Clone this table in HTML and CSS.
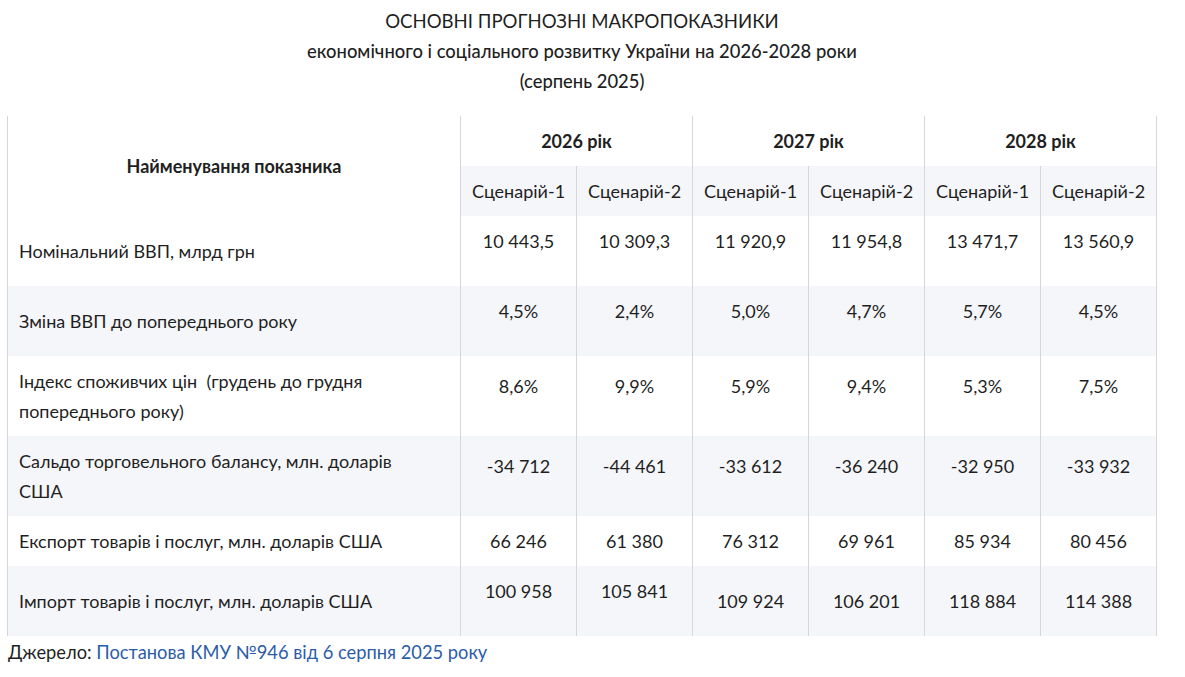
FILE: index.html
```html
<!DOCTYPE html>
<html lang="uk">
<head>
<meta charset="utf-8">
<title>Основні прогнозні макропоказники</title>
<link rel="stylesheet" href="styles.css">
</head>
<body>
<div class="page">
  <h1 class="title">ОСНОВНІ ПРОГНОЗНІ МАКРОПОКАЗНИКИ</h1>
  <p class="subtitle">економічного і соціального розвитку України на 2026-2028 роки</p>
  <p class="date">(серпень 2025)</p>
  <table class="macro">
    <colgroup>
      <col class="col-name">
      <col><col><col><col><col><col>
    </colgroup>
    <thead>
      <tr class="years">
        <th rowspan="2" class="name-head">Найменування показника</th>
        <th colspan="2">2026 рік</th>
        <th colspan="2">2027 рік</th>
        <th colspan="2">2028 рік</th>
      </tr>
      <tr class="scen">
        <th>Сценарій-1</th><th>Сценарій-2</th>
        <th>Сценарій-1</th><th>Сценарій-2</th>
        <th>Сценарій-1</th><th>Сценарій-2</th>
      </tr>
    </thead>
    <tbody>
      <tr>
        <td class="label">Номінальний ВВП, млрд грн</td>
        <td class="num lifted">10 443,5</td><td class="num lifted">10 309,3</td>
        <td class="num lifted">11 920,9</td><td class="num lifted">11 954,8</td>
        <td class="num lifted">13 471,7</td><td class="num lifted">13 560,9</td>
      </tr>
      <tr class="alt">
        <td class="label">Зміна ВВП до попереднього року</td>
        <td class="num lifted">4,5%</td><td class="num lifted">2,4%</td>
        <td class="num lifted">5,0%</td><td class="num lifted">4,7%</td>
        <td class="num lifted">5,7%</td><td class="num lifted">4,5%</td>
      </tr>
      <tr>
        <td class="label">Індекс споживчих цін &nbsp;(грудень до грудня попереднього року)</td>
        <td class="num lifted">8,6%</td><td class="num lifted">9,9%</td>
        <td class="num lifted">5,9%</td><td class="num lifted">9,4%</td>
        <td class="num lifted">5,3%</td><td class="num lifted">7,5%</td>
      </tr>
      <tr class="alt">
        <td class="label">Сальдо торговельного балансу, млн. доларів США</td>
        <td class="num lifted">-34 712</td><td class="num lifted">-44 461</td>
        <td class="num lifted">-33 612</td><td class="num lifted">-36 240</td>
        <td class="num lifted">-32 950</td><td class="num lifted">-33 932</td>
      </tr>
      <tr>
        <td class="label">Експорт товарів і послуг, млн. доларів США</td>
        <td class="num">66 246</td><td class="num">61 380</td>
        <td class="num">76 312</td><td class="num">69 961</td>
        <td class="num">85 934</td><td class="num">80 456</td>
      </tr>
      <tr class="alt">
        <td class="label">Імпорт товарів і послуг, млн. доларів США</td>
        <td class="num lifted">100 958</td><td class="num lifted">105 841</td>
        <td class="num">109 924</td><td class="num">106 201</td>
        <td class="num">118 884</td><td class="num">114 388</td>
      </tr>
    </tbody>
  </table>
  <p class="source">Джерело: <a href="#">Постанова КМУ №946 від 6 серпня 2025 року</a></p>
</div>
</body>
</html>
```
FILE: styles.css
```css
html, body {
  margin: 0;
  padding: 0;
  background: #ffffff;
}

body {
  font-family: Lato, "Noto Sans", "Liberation Sans", sans-serif;
  color: #1f1f1f;
  font-size: 18px;
}

.page {
  width: 1150px;
  margin-left: 7px;
  padding-top: 6px;
}

.title {
  margin: 0;
  font-size: 18.6px;
  font-weight: 400;
  line-height: 30px;
  text-align: center;
}

.subtitle,
.date {
  margin: 0;
  font-size: 18.4px;
  font-weight: 500;
  line-height: 30px;
  text-align: center;
}

.macro {
  margin-top: 20px;
  width: 1150px;
  border-collapse: collapse;
  table-layout: fixed;
}

.col-name {
  width: 453px;
}

.macro th,
.macro td {
  border-left: 1px solid #d6d6da;
  border-right: 1px solid #d6d6da;
  padding: 10px 12px;
  line-height: 30px;
  font-size: 18px;
  vertical-align: middle;
}

.macro th {
  font-weight: 700;
  text-align: center;
}

.macro .scen th {
  font-weight: 400;
  background: #f5f6fa;
  padding-left: 2px;
  padding-right: 2px;
}

.macro .name-head {
  background: #ffffff;
}

.macro .label {
  text-align: left;
  padding-left: 11px;
  padding-right: 46px;
}

.macro .num {
  text-align: center;
  padding-left: 2px;
  padding-right: 2px;
}

.macro .num.lifted {
  padding-bottom: 30px;
}

.macro .alt td {
  background: #f5f6fa;
}

.source {
  margin: 0;
  padding-left: 1px;
  font-size: 18.3px;
  line-height: 32px;
}

.source a {
  color: #2c5ca8;
  text-decoration: none;
}
```
